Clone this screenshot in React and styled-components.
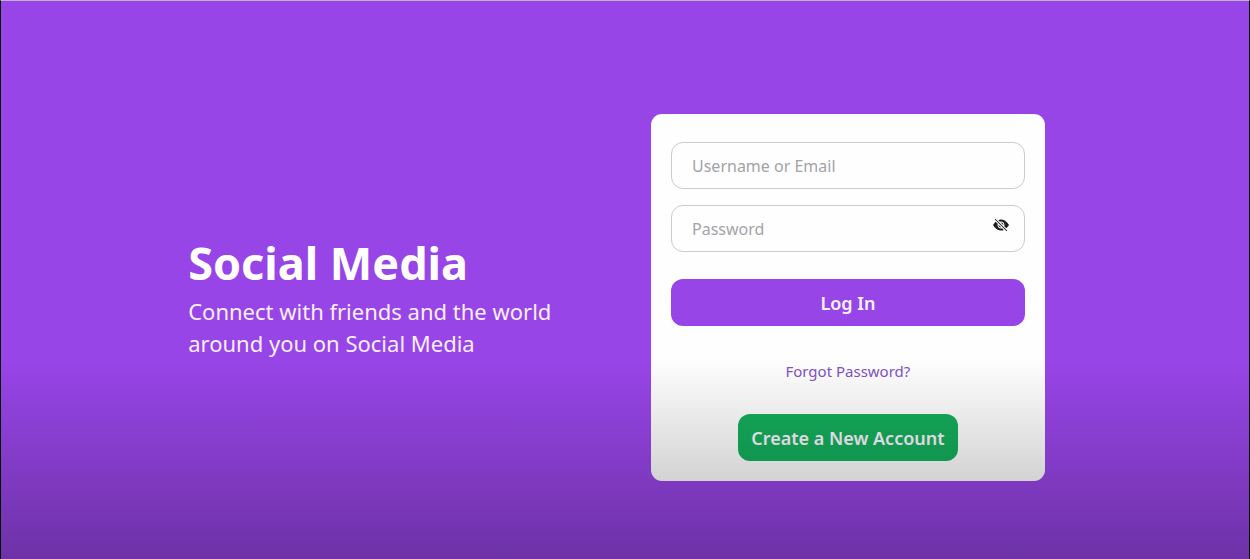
import React, { useState } from "react";
import styled, { createGlobalStyle } from "styled-components";
import { BsEyeFill, BsEyeSlashFill } from "react-icons/bs";

const GlobalStyle = createGlobalStyle`
  *, *::before, *::after { box-sizing: border-box; }
  body {
    margin: 0;
    font-family: "Segoe UI", "Noto Sans", sans-serif;
  }
`;

const Page = styled.main`
  position: relative;
  display: flex;
  align-items: center;
  justify-content: center;
  min-height: 100vh;
  padding-top: 34px;
  background: #9845e8;
  border: 1px solid #000;
  border-top-color: #c3b0cf;
  border-bottom: 0;
`;

const Shade = styled.div`
  position: absolute;
  inset: auto 0 0;
  height: 36%;
  background: linear-gradient(transparent, rgba(0, 0, 0, 0.28));
  pointer-events: none;
`;

const Columns = styled.div`
  display: grid;
  grid-template-columns: 1fr 1fr;
  align-items: center;
  width: 70%;
`;

const Intro = styled.section`
  padding-bottom: 4px;
`;

const Title = styled.h1`
  margin: 0;
  color: #fff;
  font-size: 45px;
  line-height: 64px;
  font-weight: 700;
`;

const Tagline = styled.p`
  max-width: 380px;
  margin: 0;
  color: #f8effd;
  font-size: 22px;
  line-height: 32px;
`;

const Card = styled.form`
  display: flex;
  flex-direction: column;
  align-items: center;
  margin: 0 17px 0 26px;
  padding: 28px 20px 20px;
  background: #fefefe;
  border-radius: 11px;
`;

const Field = styled.div`
  position: relative;
  width: 100%;
  margin-bottom: 16px;
`;

const Input = styled.input`
  display: block;
  width: 100%;
  height: 47px;
  padding: 2px 20px 0;
  border: 1px solid #cbcbcb;
  border-radius: 12px;
  background: transparent;
  color: #222;
  font-family: inherit;
  font-size: 16px;

  &::placeholder { color: #a3a3a7; opacity: 1; }
`;

const Toggle = styled.button`
  position: absolute;
  top: 12px;
  right: 16px;
  display: flex;
  padding: 0;
  border: 0;
  background: none;
  color: #1d1d20;
  font-size: 16px;
  cursor: pointer;
`;

const Button = styled.button`
  width: ${({ $wide }) => ($wide ? "100%" : "auto")};
  height: 47px;
  margin-top: ${({ $wide }) => ($wide ? "11px" : "0")};
  padding: 2px 13px 0;
  border: 0;
  border-radius: 12px;
  background: ${({ $color }) => $color};
  color: #fbf3fc;
  font-family: inherit;
  font-size: 18px;
  font-weight: 600;
  white-space: nowrap;
  cursor: pointer;
`;

const Forgot = styled.a`
  margin: 33px 0 31px;
  color: #8152c6;
  font-size: 15px;
  line-height: 24px;
  text-decoration: none;
`;

export default function App() {
  const [visible, setVisible] = useState(false);

  return (
    <>
      <GlobalStyle />
      <Page>
        <Columns>
          <Intro>
            <Title>Social Media</Title>
            <Tagline>Connect with friends and the world around you on Social Media</Tagline>
          </Intro>
          <Card onSubmit={(event) => event.preventDefault()}>
            <Field>
              <Input type="text" aria-label="Username or Email" placeholder="Username or Email" />
            </Field>
            <Field>
              <Input
                type={visible ? "text" : "password"}
                aria-label="Password"
                placeholder="Password"
              />
              <Toggle
                type="button"
                aria-label={visible ? "Hide password" : "Show password"}
                onClick={() => setVisible(!visible)}
              >
                {visible ? <BsEyeFill /> : <BsEyeSlashFill />}
              </Toggle>
            </Field>
            <Button type="submit" $wide $color="#9845e8">Log In</Button>
            <Forgot href="#forgot">Forgot Password?</Forgot>
            <Button type="button" $color="#14ae5c">Create a New Account</Button>
          </Card>
        </Columns>
        <Shade />
      </Page>
    </>
  );
}
